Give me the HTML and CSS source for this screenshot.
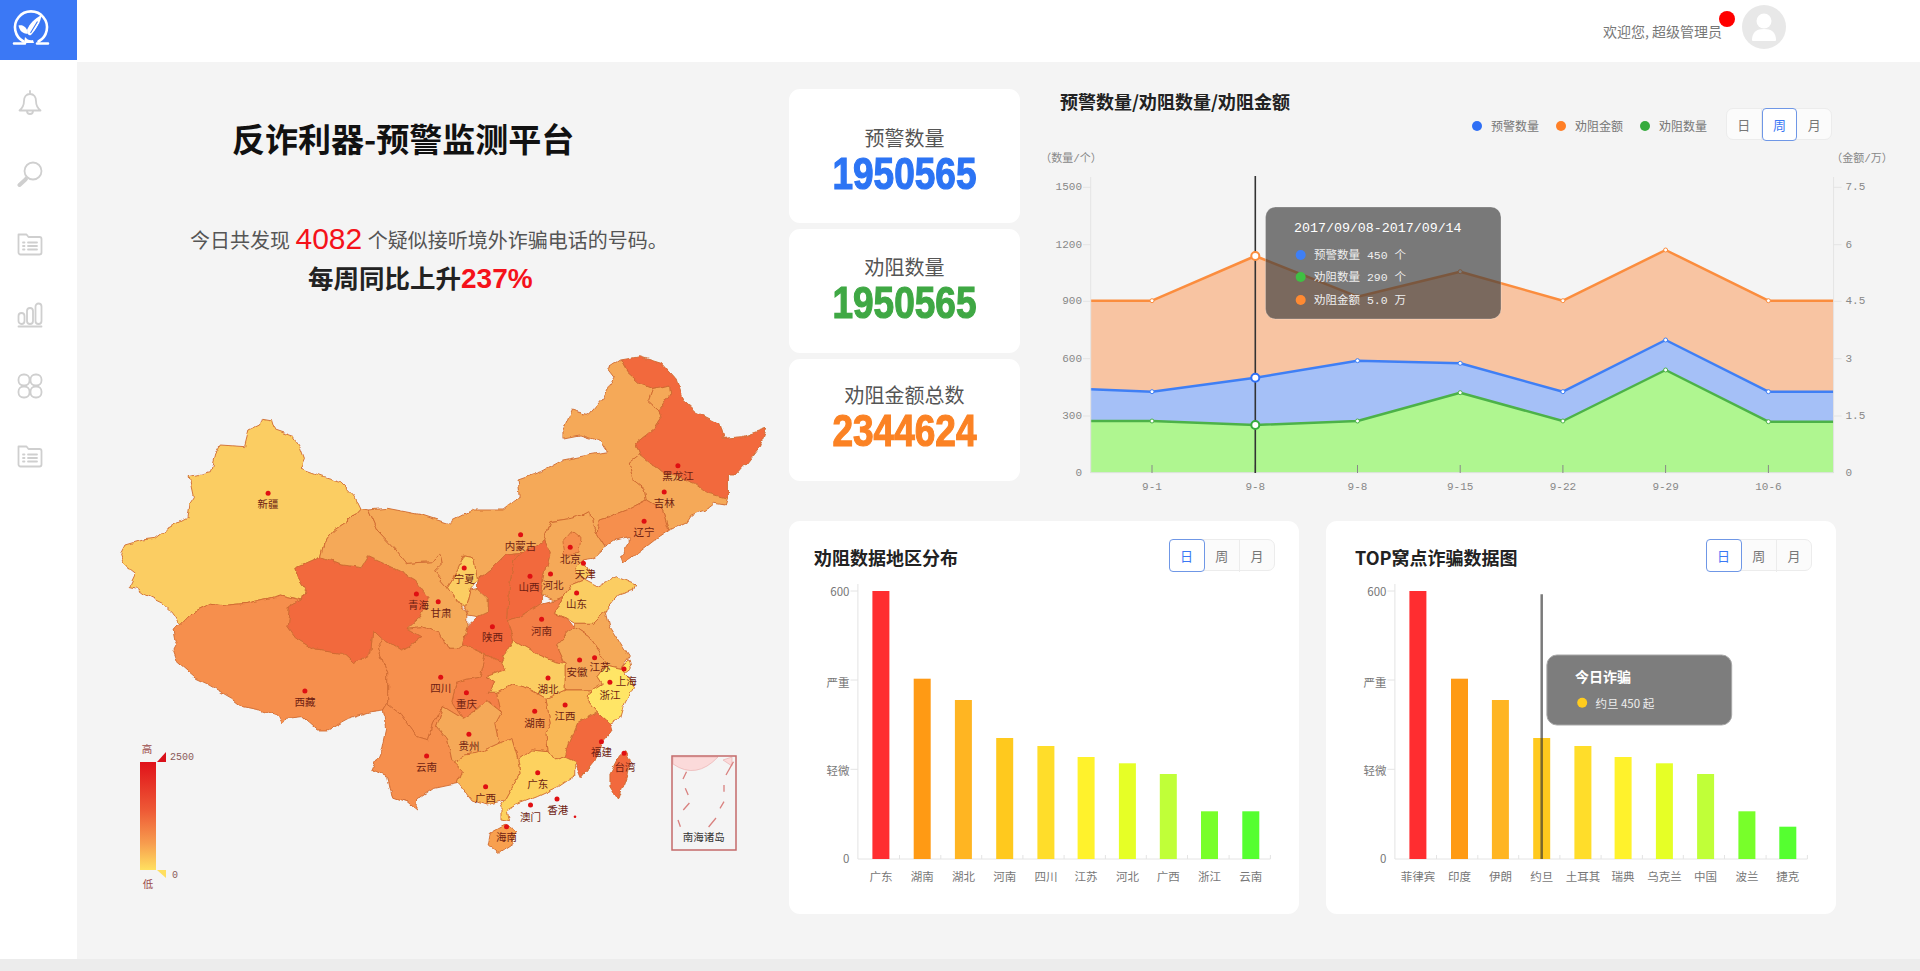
FILE: index.html
```html
<!DOCTYPE html>
<html lang="zh-CN">
<head>
<meta charset="utf-8">
<title>反诈利器-预警监测平台</title>
<link rel="stylesheet" href="styles.css">
</head>
<body>
<div class="app">
  <aside class="sidebar">
    <div class="logo">
      <svg viewBox="0 0 77 60" width="77" height="60">
        <g class="logo-line">
          <path d="M23.500 41.500A16 16 0 1 1 38.500 41.500"/>
          <path d="M14 43.500h11M37 43.500h11"/>
        </g>
        <path class="logo-fill" d="M18.500 25.500c4.500-1 8.500 1.500 9.500 8-4.500 1-8.500-2.500-9.500-8z"/>
        <path class="logo-fill" d="M27 30c2.500-6 7.500-11.500 14.500-15-1 7.500-5 14.500-10.500 20-2 1-3.500 0-4-5z"/>
        <path class="logo-cut" d="M30.500 33l7-11.500M33.500 34l6-10"/>
        <path class="logo-fill" d="M25 37c2 2.500 5 4 8 3l1 3h-10z"/>
      </svg>
    </div>
    <nav class="nav">
      <div class="nav-item"><svg viewBox="0 0 24 26" width="24" height="26"><path d="M12 4C8 4 6 7 6 11c0 5-1.500 7-4.500 9.500h21C19.500 18 18 16 18 11c0-4-2-7-6-7zM12 1v3M9 21a3 3 0 0 0 6 0"/></svg></div>
      <div class="nav-item"><svg viewBox="0 0 26 26" width="26" height="26"><circle cx="16" cy="10" r="8.500"/><path class="thick" d="M2.500 24l6-5.500"/><path d="M10 18l-1.500-1.500"/></svg></div>
      <div class="nav-item"><svg viewBox="0 0 26 24" width="26" height="24"><path d="M1.500 20.500V2.500h8l2 2.500h11a2 2 0 0 1 2 2v13.500a2 2 0 0 1-2 2h-19a2 2 0 0 1-2-2zM6 10.500h1.500M6 14h1.500M6 17.500h1.500M11 10.500h9M11 14h9M11 17.500h9"/></svg></div>
      <div class="nav-item"><svg viewBox="0 0 26 26" width="26" height="26"><rect x="1.500" y="11" width="6" height="11" rx="3"/><rect x="10" y="6" width="6" height="16" rx="3"/><rect x="18.500" y="1.500" width="6" height="20.500" rx="3"/><path d="M1.500 24.500h23"/></svg></div>
      <div class="nav-item"><svg viewBox="0 0 26 26" width="26" height="26"><rect x="1.500" y="1.500" width="11" height="11" rx="5"/><rect x="13.500" y="1.500" width="11" height="11" rx="5"/><rect x="1.500" y="13.500" width="11" height="11" rx="5"/><rect x="13.500" y="13.500" width="11" height="11" rx="5"/></svg></div>
      <div class="nav-item"><svg viewBox="0 0 26 24" width="26" height="24"><path d="M1.500 20.500V2.500h8l2 2.500h11a2 2 0 0 1 2 2v13.500a2 2 0 0 1-2 2h-19a2 2 0 0 1-2-2zM6 10.500h1.500M6 14h1.500M6 17.500h1.500M11 10.500h9M11 14h9M11 17.500h9"/></svg></div>
    </nav>
  </aside>

  <div class="main">
    <header class="topbar">
      <span class="welcome">欢迎您, 超级管理员</span>
      <span class="badge"></span>
      <span class="avatar">
        <svg viewBox="0 0 44 44" width="44" height="44"><circle cx="22" cy="16" r="7.500"/><path d="M10 35c0-8 5-11 12-11s12 3 12 11c0 1-1 1-2 1H12c-1 0-2 0-2-1z"/></svg>
      </span>
    </header>

    <div class="content">
      <section class="left">
        <h1 class="page-title">反诈利器-预警监测平台</h1>
        <p class="summary">今日共发现 <em class="summary-num">4082</em> 个疑似接听境外诈骗电话的号码。</p>
        <p class="trend">每周同比上升<em class="trend-num">237%</em></p>
        <svg class="map" viewBox="0 0 670 555" width="670" height="555">
          <defs>
            <linearGradient id="legendGrad" x1="0" y1="0" x2="0" y2="1">
              <stop offset="0" stop-color="#e0121a"/>
              <stop offset=".45" stop-color="#ee5a36"/>
              <stop offset=".75" stop-color="#f79c4e"/>
              <stop offset="1" stop-color="#ffe060"/>
            </linearGradient>
            <filter id="wiggle" filterUnits="userSpaceOnUse" x="0" y="0" width="1600" height="1600">
              <feTurbulence type="fractalNoise" baseFrequency=".035" numOctaves="2" seed="4" result="n"/>
              <feDisplacementMap in="SourceGraphic" in2="n" scale="16" xChannelSelector="R" yChannelSelector="G"/>
            </filter>
          </defs>
          <g transform="scale(.4273 .33333)" class="provinces" filter="url(#wiggle)">
            <polygon class="p1" points="25,640 35,615 75,600 105,595 130,570 180,535 185,490 195,470 185,410 235,395 245,345 258,315 315,320 325,270 350,255 355,235 378,240 385,270 430,290 445,320 455,355 445,385 500,410 540,425 570,465 585,505 560,540 525,570 505,600 495,650 470,665 435,685 445,720 458,745 450,780 400,765 370,775 320,790 275,795 235,790 195,815 165,855 150,820 125,790 85,765 65,745 45,740 60,700 35,675"/>
            <polygon class="p3" points="165,855 195,815 235,790 275,795 320,790 370,775 400,765 450,780 420,800 415,860 435,895 480,930 545,940 570,970 610,940 615,870 640,900 625,925 650,1000 650,1090 640,1110 610,1115 560,1135 510,1170 485,1170 450,1130 415,1135 405,1155 395,1130 350,1110 310,1100 285,1075 225,1030 200,1015 155,965 145,930 155,905 150,870"/>
            <polygon class="p4" points="435,685 470,665 495,650 535,670 590,680 605,650 640,670 680,695 715,720 745,770 725,830 695,865 730,890 700,920 680,930 650,905 640,900 615,870 610,940 570,970 545,940 480,930 435,895 415,860 420,800 450,780 458,745 445,720"/>
            <polygon class="p2" points="585,505 605,510 625,570 670,630 695,670 750,665 775,640 780,670 760,695 790,740 820,790 835,825 835,860 825,915 815,925 790,925 770,880 730,860 695,865 725,830 745,770 715,720 680,695 640,670 605,650 590,680 535,670 495,650 505,600 525,570 560,540"/>
            <polygon class="p2" points="605,510 650,505 730,525 790,550 850,510 920,510 960,470 955,420 1010,395 1060,360 1120,345 1165,335 1150,305 1100,285 1060,295 1060,270 1080,210 1120,225 1150,180 1180,110 1165,85 1195,60 1210,95 1240,130 1270,145 1260,180 1285,210 1290,235 1275,265 1230,310 1240,345 1215,370 1225,420 1250,445 1255,480 1210,510 1170,530 1145,540 1140,580 1130,560 1125,515 1080,535 1030,545 1015,600 965,640 925,645 890,690 860,720 850,650 830,645 810,700 790,740 760,695 780,670 775,640 750,665 695,670 670,630 625,570"/>
            <polygon class="p2" points="1270,145 1310,135 1312,165 1285,210 1260,180"/>
            <polygon class="p4" points="1195,60 1240,50 1290,70 1325,120 1340,180 1370,215 1425,250 1435,295 1480,290 1535,265 1520,320 1490,370 1465,405 1445,405 1445,475 1400,460 1370,430 1330,410 1290,395 1250,355 1240,345 1230,310 1275,265 1290,235 1285,210 1312,165 1310,135 1270,145 1240,130 1210,95"/>
            <polygon class="p2" points="1215,370 1240,345 1250,355 1290,395 1330,410 1370,430 1400,460 1445,475 1440,495 1415,490 1395,510 1360,525 1350,545 1310,570 1295,510 1255,480 1250,445 1225,420"/>
            <polygon class="p3" points="1255,480 1295,510 1310,570 1275,600 1235,640 1200,670 1195,650 1215,610 1215,590 1185,600 1160,620 1145,590 1140,580 1145,540 1170,530 1210,510"/>
            <polygon class="p2" points="1030,545 1080,535 1125,515 1130,560 1140,580 1160,620 1130,655 1105,660 1125,700 1110,720 1080,735 1060,770 1040,780 1010,765 1015,720 1030,640 1015,600"/>
            <polygon class="p3" points="1060,605 1080,575 1100,595 1095,640 1065,645"/>
            <polygon class="p1" points="1105,660 1125,700 1110,720 1090,690"/>
            <polygon class="p4" points="1015,600 1030,640 1015,720 1010,765 1010,790 960,830 930,845 935,740 945,660 965,640"/>
            <polygon class="p4" points="925,645 965,640 945,660 935,740 930,845 945,900 915,965 880,945 825,915 835,860 860,830 885,815 885,775 860,745 860,720 890,690"/>
            <polygon class="p1" points="810,700 830,645 850,650 860,720 840,750 830,800 820,790 790,740"/>
            <polygon class="p2" points="840,750 860,745 885,775 885,815 860,830 835,825 830,800"/>
            <polygon class="p1" points="1040,820 1060,770 1080,735 1110,720 1140,740 1185,710 1230,735 1225,750 1190,765 1160,810 1130,850 1090,850 1070,835"/>
            <polygon class="p35" points="930,845 960,830 1010,790 1040,780 1060,770 1040,820 1070,835 1085,860 1045,915 1065,970 1040,965 1005,945 945,900"/>
            <polygon class="p2" points="1090,850 1130,850 1160,810 1170,860 1190,900 1215,950 1195,985 1160,975 1145,935 1120,890 1085,860"/>
            <polygon class="p2" points="1085,860 1120,890 1145,935 1160,975 1140,1010 1150,1030 1125,1050 1065,1050 1065,970 1045,915"/>
            <polygon class="p0" points="1195,985 1215,960 1220,985 1205,1000"/>
            <polygon class="p0" points="1160,975 1195,985 1205,1000 1225,1040 1205,1090 1195,1135 1170,1150 1140,1115 1120,1085 1125,1050 1150,1030 1140,1010"/>
            <polygon class="p4" points="1140,1115 1170,1150 1175,1175 1150,1210 1130,1270 1105,1310 1090,1265 1065,1250 1075,1210 1095,1150"/>
            <polygon class="p15" points="1065,1050 1125,1050 1120,1085 1140,1115 1095,1150 1075,1210 1065,1250 1040,1260 1025,1235 1020,1180 1030,1150 1020,1075"/>
            <polygon class="p1" points="880,1010 915,965 945,900 1005,945 1040,965 1065,970 1065,1050 1020,1075 985,1050 940,1035 905,1060 885,1060 900,1025"/>
            <polygon class="p25" points="905,1060 940,1035 985,1050 1020,1075 1030,1150 1020,1180 1025,1235 985,1230 955,1260 940,1195 910,1210 900,1150 915,1115"/>
            <polygon class="p35" points="810,1030 835,1020 865,1015 880,945 915,965 925,990 880,1010 900,1025 885,1060 905,1060 915,1115 880,1080 855,1110 825,1135 800,1085"/>
            <polygon class="p3" points="640,900 650,905 680,930 700,920 730,890 695,865 730,860 770,880 790,925 815,925 825,915 880,945 865,1015 835,1020 810,1030 800,1085 825,1135 780,1100 760,1140 745,1200 720,1190 680,1120 650,1090 650,1000 625,925"/>
            <polygon class="p3" points="640,1110 650,1090 680,1120 720,1190 745,1200 760,1140 780,1100 765,1160 790,1200 800,1260 825,1295 815,1330 760,1345 720,1380 718,1410 695,1385 660,1370 650,1310 615,1290 635,1230 645,1170"/>
            <polygon class="p2" points="780,1100 825,1135 855,1110 880,1080 915,1115 900,1150 910,1210 860,1240 830,1245 805,1270 800,1260 790,1200 765,1160"/>
            <polygon class="p15" points="805,1270 830,1245 860,1240 910,1210 940,1195 955,1260 960,1300 925,1380 880,1395 845,1380 815,1330 825,1295"/>
            <polygon class="p05" points="955,1260 985,1230 1025,1235 1040,1260 1065,1250 1090,1265 1090,1305 1050,1340 1000,1370 950,1395 930,1410 935,1445 915,1440 915,1400 925,1380 960,1300"/>
            <polygon class="p25" points="890,1480 925,1455 950,1475 945,1510 910,1540 885,1515"/>
            <polygon class="p4" points="1190,1250 1205,1235 1215,1260 1210,1305 1190,1380 1170,1340 1170,1300"/>
          </g>
          <g class="map-dots">
            <circle cx="158.100" cy="153.300" r="2.500"/><circle cx="194.900" cy="351" r="2.500"/><circle cx="306.400" cy="254" r="2.500"/><circle cx="328.200" cy="261.700" r="2.500"/><circle cx="354.200" cy="228" r="2.500"/><circle cx="410.600" cy="194.700" r="2.500"/><circle cx="382.400" cy="286.700" r="2.500"/><circle cx="420" cy="236.300" r="2.500"/><circle cx="440.500" cy="234" r="2.500"/><circle cx="460.200" cy="207.300" r="2.500"/><circle cx="473.400" cy="223.300" r="2.500"/><circle cx="534.100" cy="181.300" r="2.500"/><circle cx="554.200" cy="152" r="2.500"/><circle cx="567.900" cy="125.700" r="2.500"/><circle cx="466.600" cy="253" r="2.500"/><circle cx="431.600" cy="279.300" r="2.500"/><circle cx="484.600" cy="317.700" r="2.500"/><circle cx="469.600" cy="320" r="2.500"/><circle cx="514" cy="329" r="2.500"/><circle cx="438" cy="338" r="2.500"/><circle cx="330.700" cy="337.300" r="2.500"/><circle cx="356.400" cy="352.700" r="2.500"/><circle cx="499.900" cy="342.300" r="2.500"/><circle cx="424.700" cy="371.300" r="2.500"/><circle cx="455.100" cy="365" r="2.500"/><circle cx="358.900" cy="394.300" r="2.500"/><circle cx="316.600" cy="416" r="2.500"/><circle cx="375.600" cy="446.700" r="2.500"/><circle cx="427.700" cy="432.700" r="2.500"/><circle cx="491.400" cy="401.700" r="2.500"/><circle cx="514" cy="413.300" r="2.500"/><circle cx="420.500" cy="465" r="2.500"/><circle cx="447" cy="459" r="2.500"/><circle cx="396.500" cy="486.700" r="2.500"/>
            <circle cx="465" cy="476.700" r="1.300"/>
          </g>
          <g class="map-labels">
            <text x="158.100" y="163.300">新疆</text><text x="194.900" y="361.700">西藏</text><text x="308.500" y="264.300">青海</text><text x="331" y="272.700">甘肃</text><text x="354.200" y="238">宁夏</text><text x="410.600" y="205.300">内蒙古</text><text x="382.400" y="296.700">陕西</text><text x="419" y="246">山西</text><text x="443" y="244.300">河北</text><text x="460.200" y="218.700">北京</text><text x="475.200" y="233.300">天津</text><text x="534.100" y="191.700">辽宁</text><text x="554.200" y="162.300">吉林</text><text x="567.900" y="135.700">黑龙江</text><text x="466.600" y="263.300">山东</text><text x="431.600" y="290">河南</text><text x="490" y="326">江苏</text><text x="467" y="331">安徽</text><text x="516.200" y="340">上海</text><text x="438" y="348.300">湖北</text><text x="330.700" y="347.700">四川</text><text x="356.400" y="363.300">重庆</text><text x="499.900" y="354">浙江</text><text x="424.700" y="382.300">湖南</text><text x="455.100" y="375.700">江西</text><text x="358.900" y="405">贵州</text><text x="316.600" y="426.700">云南</text><text x="375.600" y="457.300">广西</text><text x="427.700" y="443.300">广东</text><text x="491.400" y="411.700">福建</text><text x="514.900" y="426.700">台湾</text><text x="420.500" y="476">澳门</text><text x="447.800" y="469.300">香港</text><text x="396.500" y="496.700">海南</text>
          </g>
          <g class="inset">
            <path class="inset-pink" d="M563 424Q586 440 608 417H563zM613 420l9-3v9z"/>
            <rect class="inset-frame" x="562" y="416" width="64" height="94"/>
            <path class="inset-dash" d="M575.300 448.300l2.900 6.700M579.400 463l-6.100 7M568 480l2.400 6.700M606 478l-7.400 9M614 461.700l-4 6.600M614 445v6.700M623.500 421.700l-7.500 13.300M576.500 431.700l-3.500 7.300"/>
            <text class="inset-text" x="593.700" y="496.700">南海诸岛</text>
          </g>
          <g class="legend">
            <rect x="30" y="422" width="16" height="108" fill="url(#legendGrad)"/>
            <polygon class="tri-red" points="47,422 56,422 56,412"/>
            <polygon class="tri-yellow" points="47,530 56,530 56,538"/>
            <text x="37" y="408">高</text>
            <text x="60" y="417" class="legend-num">2500</text>
            <text x="62" y="535" class="legend-num">0</text>
            <text x="38" y="543">低</text>
          </g>
        </svg>
      </section>

      <section class="right">
        <div class="top-row">
          <div class="stats">
            <div class="stat stat-a"><div class="stat-label">预警数量</div><div class="stat-num num-blue"><span>1950565</span></div></div>
            <div class="stat stat-b"><div class="stat-label">劝阻数量</div><div class="stat-num num-green"><span>1950565</span></div></div>
            <div class="stat stat-c"><div class="stat-label">劝阻金额总数</div><div class="stat-num num-orange"><span>2344624</span></div></div>
          </div>
          <div class="trend-panel">
            <div class="trend-head">
              <h2 class="panel-title">预警数量/劝阻数量/劝阻金额</h2>
              <div class="trend-tools">
                <div class="legend-row">
                  <span class="legend-item"><i class="ldot ldot-blue"></i>预警数量</span>
                  <span class="legend-item"><i class="ldot ldot-orange"></i>劝阻金额</span>
                  <span class="legend-item"><i class="ldot ldot-green"></i>劝阻数量</span>
                </div>
                <div class="seg"><span>日</span><span class="on">周</span><span>月</span></div>
              </div>
            </div>
            <svg class="line-chart" viewBox="10 60 880 362" width="880" height="362">
              <polygon class="a-orange" points="60.700,392.700 60.700,220.700 122,220.700 225.300,176 327.500,216.700 430.200,191.700 532.900,220.700 635.600,170 738.400,220.700 803.600,220.700 803.600,392.700"/>
              <polygon class="a-blue" points="60.700,392.700 60.700,309.300 122,311.700 225.300,297.700 327.500,280.700 430.200,283.300 532.900,311.700 635.600,260 738.400,311.700 803.600,311.700 803.600,392.700"/>
              <polygon class="a-green" points="60.700,392.700 60.700,341 122,341 225.300,345 327.500,341 430.200,312.700 532.900,341 635.600,290 738.400,341.700 803.600,341.700 803.600,392.700"/>
              <polyline class="l-orange" points="60.700,220.700 122,220.700 225.300,176 327.500,216.700 430.200,191.700 532.900,220.700 635.600,170 738.400,220.700 803.600,220.700"/>
              <polyline class="l-blue" points="60.700,309.300 122,311.700 225.300,297.700 327.500,280.700 430.200,283.300 532.900,311.700 635.600,260 738.400,311.700 803.600,311.700"/>
              <polyline class="l-green" points="60.700,341 122,341 225.300,345 327.500,341 430.200,312.700 532.900,341 635.600,290 738.400,341.700 803.600,341.700"/>
              <path class="axis" d="M60.700 97V392.700H803.600V97M53 107.300h8M53 164.700h8M53 221.300h8M53 278.700h8M53 336h8M803.600 107.300h8M803.600 164.700h8M803.600 221.300h8M803.600 278.700h8M803.600 336h8"/>
              <path class="xticks" d="M122 385v8M225.300 385v8M327.500 385v8M430.200 385v8M532.900 385v8M635.600 385v8M738.400 385v8"/>
              <g class="pts pts-orange"><circle cx="122" cy="220.700" r="2"/><circle cx="327.500" cy="216.700" r="2"/><circle cx="430.200" cy="191.700" r="2"/><circle cx="532.900" cy="220.700" r="2"/><circle cx="635.600" cy="170" r="2"/><circle cx="738.400" cy="220.700" r="2"/></g>
              <g class="pts pts-blue"><circle cx="122" cy="311.700" r="2"/><circle cx="327.500" cy="280.700" r="2"/><circle cx="430.200" cy="283.300" r="2"/><circle cx="532.900" cy="311.700" r="2"/><circle cx="635.600" cy="260" r="2"/><circle cx="738.400" cy="311.700" r="2"/></g>
              <g class="pts pts-green"><circle cx="122" cy="341" r="2"/><circle cx="327.500" cy="341" r="2"/><circle cx="430.200" cy="312.700" r="2"/><circle cx="532.900" cy="341" r="2"/><circle cx="635.600" cy="290" r="2"/><circle cx="738.400" cy="341.700" r="2"/></g>
              <path class="cursor" d="M225.300 96V393"/>
              <circle class="hot hot-orange" cx="225.300" cy="176" r="4"/>
              <circle class="hot hot-blue" cx="225.300" cy="297.700" r="4"/>
              <circle class="hot hot-green" cx="225.300" cy="345" r="4"/>
              <g class="axis-text end">
                <text x="52" y="107.300">1500</text><text x="52" y="164.700">1200</text><text x="52" y="221.300">900</text><text x="52" y="278.700">600</text><text x="52" y="336">300</text><text x="52" y="392.700">0</text>
              </g>
              <g class="axis-text">
                <text x="815.500" y="107.300">7.5</text><text x="815.500" y="164.700">6</text><text x="815.500" y="221.300">4.5</text><text x="815.500" y="278.700">3</text><text x="815.500" y="336">1.5</text><text x="815.500" y="392.700">0</text>
              </g>
              <g class="axis-text mid">
                <text x="122" y="407">9-1</text><text x="225.300" y="407">9-8</text><text x="327.500" y="407">9-8</text><text x="430.200" y="407">9-15</text><text x="532.900" y="407">9-22</text><text x="635.600" y="407">9-29</text><text x="738.400" y="407">10-6</text>
                <text x="41" y="79">（数量/个）</text><text x="832" y="79">（金额/万）</text>
              </g>
              <g class="tip">
                <rect class="tip-box" x="235.500" y="127" width="235.500" height="112" rx="10"/>
                <text class="tip-head" x="264" y="148">2017/09/08-2017/09/14</text>
                <circle class="tip-blue" cx="270.700" cy="175" r="5"/><text class="tip-row" x="284" y="175">预警数量 450 个</text>
                <circle class="tip-green" cx="270.700" cy="197" r="5"/><text class="tip-row" x="284" y="197">劝阻数量 290 个</text>
                <circle class="tip-orange" cx="270.700" cy="220" r="5"/><text class="tip-row" x="284" y="220">劝阻金额 5.0 万</text>
              </g>
            </svg>
          </div>
        </div>

        <div class="bottom-row">
          <article class="card">
            <div class="card-head">
              <h2 class="panel-title">劝阻数据地区分布</h2>
              <div class="seg"><span class="on">日</span><span>周</span><span>月</span></div>
            </div>
            <svg class="bars" viewBox="9.500 60 510 344" width="510" height="344">
              <path class="axis" d="M78.400 74V349H490.900M71 81h7.400M71 170h7.400M71 259.300h7.400M120 345v4M161.300 345v4M202.200 345v4M243.400 345v4M284.600 345v4M325.900 345v4M366.800 345v4M408 345v4M449.600 345v4M490.900 345v4"/>
              <rect class="b1" x="92.900" y="81" width="17" height="268"/>
              <rect class="b2" x="134.200" y="168.700" width="17" height="180.300"/>
              <rect class="b3" x="175.400" y="190" width="17" height="159"/>
              <rect class="b4" x="216.700" y="228" width="17" height="121"/>
              <rect class="b5" x="257.900" y="236" width="17" height="113"/>
              <rect class="b6" x="298.100" y="247" width="17" height="102"/>
              <rect class="b7" x="339.400" y="253.300" width="17" height="95.700"/>
              <rect class="b8" x="380.300" y="264" width="17" height="85"/>
              <rect class="b9" x="421.500" y="301.300" width="17" height="47.700"/>
              <rect class="b10" x="462.800" y="301.300" width="17" height="47.700"/>
              <g class="bar-text end"><text x="70" y="81">600</text><text x="70" y="172">严重</text><text x="70" y="260">轻微</text><text x="70" y="348">0</text></g>
              <g class="bar-text mid"><text x="101.400" y="366">广东</text><text x="142.700" y="366">湖南</text><text x="183.900" y="366">湖北</text><text x="225.200" y="366">河南</text><text x="266.400" y="366">四川</text><text x="306.600" y="366">江苏</text><text x="347.900" y="366">河北</text><text x="388.800" y="366">广西</text><text x="430" y="366">浙江</text><text x="471.300" y="366">云南</text></g>
            </svg>
          </article>

          <article class="card">
            <div class="card-head card-head-b">
              <h2 class="panel-title">TOP窝点诈骗数据图</h2>
              <div class="seg"><span class="on">日</span><span>周</span><span>月</span></div>
            </div>
            <svg class="bars" viewBox="6.100 60 510 344" width="510" height="344">
              <path class="axis" d="M75 74V349H487.500M67.500 81h7.500M67.500 170h7.500M67.500 259.300h7.500M116.600 345v4M157.900 345v4M198.800 345v4M240 345v4M281.200 345v4M322.500 345v4M363.400 345v4M404.600 345v4M446.200 345v4M487.500 345v4"/>
              <rect class="b1" x="89.500" y="81" width="17" height="268"/>
              <rect class="b2" x="131.100" y="168.700" width="17" height="180.300"/>
              <rect class="b3" x="172" y="190" width="17" height="159"/>
              <rect class="b4" x="213.300" y="228" width="17" height="121"/>
              <rect class="b5" x="254.500" y="236" width="17" height="113"/>
              <rect class="b6" x="294.700" y="247" width="17" height="102"/>
              <rect class="b7" x="336" y="253.300" width="17" height="95.700"/>
              <rect class="b8" x="377.200" y="264" width="17" height="85"/>
              <rect class="b9" x="418.500" y="301.300" width="17" height="47.700"/>
              <rect class="b10" x="459.400" y="316.700" width="17" height="32.300"/>
              <g class="bar-text end"><text x="66.500" y="81">600</text><text x="66.500" y="172">严重</text><text x="66.500" y="260">轻微</text><text x="66.500" y="348">0</text></g>
              <g class="bar-text mid"><text x="98" y="366">菲律宾</text><text x="139.600" y="366">印度</text><text x="180.500" y="366">伊朗</text><text x="221.800" y="366">约旦</text><text x="263" y="366">土耳其</text><text x="303.200" y="366">瑞典</text><text x="344.500" y="366">乌克兰</text><text x="385.700" y="366">中国</text><text x="427" y="366">波兰</text><text x="467.900" y="366">捷克</text></g>
              <path class="bar-cursor" d="M221.800 84.300V349"/>
              <rect class="bar-tip" x="227" y="145" width="184.800" height="70" rx="10"/>
              <text class="bar-tip-head" x="255" y="165.700">今日诈骗</text>
              <circle class="bar-tip-dot" cx="262.300" cy="192.700" r="5"/>
              <text class="bar-tip-row" x="275.500" y="192.700">约旦 450 起</text>
            </svg>
          </article>
        </div>
      </section>
    </div>
  </div>
</div>
</body>
</html>
```
FILE: styles.css
```css
* { box-sizing: border-box; }
html, body { margin: 0; padding: 0; }
body {
  background: #ececec;
  height: 971px;
  overflow: hidden;
  font-family: "Noto Sans CJK SC", "Liberation Sans", sans-serif;
  color: #333;
}
.app { display: flex; height: 959px; }

/* sidebar */
.sidebar { width: 77px; flex: none; background: #fff; }
.logo { height: 60px; background: #3b78f5; }
.logo svg { display: block; }
.logo-line { fill: none; stroke: #fff; stroke-width: 2.6; stroke-linecap: round; }
.logo-fill { fill: #fff; }
.logo-cut { fill: none; stroke: #3b78f5; stroke-width: 1.1; }
.nav { padding-top: 8px; }
.nav-item { height: 70.6px; display: flex; align-items: center; justify-content: center; padding-right: 18px; }
.nav-item svg { fill: none; stroke: #cfcfcf; stroke-width: 1.8; stroke-linecap: round; stroke-linejoin: round; }
.nav-item .thick { stroke-width: 4; }

/* top bar */
.main { flex: 1; display: flex; flex-direction: column; min-width: 0; }
.topbar {
  height: 62px; flex: none; background: #fff;
  display: flex; align-items: flex-start; justify-content: flex-end;
  padding-right: 134px; position: relative;
}
.welcome { font-size: 14px; line-height: 20px; color: #777; margin-top: 21px; margin-right: 20px; }
.badge { position: absolute; right: 185px; top: 11px; width: 16px; height: 16px; border-radius: 50%; background: #f00; }
.avatar { width: 44px; height: 44px; margin-top: 5px; border-radius: 50%; background: #e8e8e8; overflow: hidden; }
.avatar svg { display: block; fill: #fff; }

/* layout */
.content { flex: 1; display: flex; background: #f4f4f4; min-height: 0; }
.left { width: 712px; flex: none; }
.right { flex: 1; padding-top: 27px; min-width: 0; }
.top-row { display: flex; height: 392px; }
.bottom-row { display: flex; gap: 27px; margin-top: 40px; }

/* left panel */
.page-title { margin: 58px 0 0 155px; font-size: 33px; line-height: 36px; font-weight: 700; color: #111; white-space: nowrap; }
.summary { margin: 64px 0 0 113px; font-size: 20px; line-height: 40px; color: #555; white-space: nowrap; word-spacing: 1px; }
.summary-num { font-style: normal; font-size: 30px; color: #f5121a; font-family: "Liberation Sans", sans-serif; vertical-align: -1px; line-height: 30px; }
.trend { margin: 0 0 0 231px; font-size: 25.500px; line-height: 34px; font-weight: 700; color: #222; white-space: nowrap; }
.trend-num { font-style: normal; color: #f5121a; font-family: "Liberation Sans", sans-serif; font-size: 28px; line-height: 30px; }
.map { display: block; margin: 46px 0 0 33px; }
.provinces polygon { stroke: #cf6a30; stroke-width: .9; stroke-linejoin: round; vector-effect: non-scaling-stroke; }
.p0 { fill: #ffe566; }
.p05 { fill: #fdd25e; }
.p1 { fill: #fbcd62; }
.p15 { fill: #f9b857; }
.p2 { fill: #f5a958; }
.p25 { fill: #f8a050; }
.p3 { fill: #f68f4d; }
.p35 { fill: #f47f47; }
.p4 { fill: #f2693e; }
.map-dots circle { fill: #e00f12; }
.map-labels text { font-size: 10.500px; fill: #6e1d12; text-anchor: middle; dominant-baseline: central; }
.inset-frame { fill: none; stroke: #c46a6a; stroke-width: 1.5; }
.inset-pink { fill: #fbdada; stroke: #e9a7a7; stroke-width: .6; }
.inset-dash { fill: none; stroke: #d9817f; stroke-width: 1.3; }
.inset-text { font-size: 10.500px; fill: #333; text-anchor: middle; dominant-baseline: central; }
.tri-red { fill: #d9101a; }
.tri-yellow { fill: #ffdf60; }
.legend text { font-size: 10.500px; fill: #9a4a4a; text-anchor: middle; dominant-baseline: central; }
.legend .legend-num { text-anchor: start; font-family: "Liberation Mono", monospace; font-size: 10px; fill: #8a5a5a; }

/* stat cards */
.stats { width: 231px; flex: none; display: flex; flex-direction: column; gap: 6px; }
.stat { background: #fff; border-radius: 11px; text-align: center; }
.stat-a { height: 134px; padding-top: 35px; }
.stat-b { height: 124px; padding-top: 24px; }
.stat-c { height: 122px; padding-top: 22px; }
.stat-label { font-size: 20px; line-height: 28px; color: #555; }
.stat-num { font-family: "Liberation Sans", sans-serif; font-weight: 700; font-size: 37px; line-height: 46px; -webkit-text-stroke: 1px currentColor; }
.stat-num span { display: inline-block; transform: scaleY(1.2); }
.num-blue { color: #2c74f4; }
.num-green { color: #3fa844; }
.num-orange { color: #fb8224; }

/* trend chart */
.trend-panel { margin-left: 20px; flex: 1; min-width: 0; }
.trend-head { height: 51px; display: flex; justify-content: space-between; padding: 0 88px 0 20px; }
.panel-title { margin: 0; font-size: 18px; line-height: 24px; font-weight: 700; color: #222; white-space: nowrap; }
.trend-tools { align-self: flex-end; display: flex; align-items: center; gap: 19px; }
.legend-row { display: flex; gap: 17px; margin-top: 4px; }
.legend-item { display: flex; align-items: center; gap: 9px; font-size: 12px; line-height: 16px; color: #777; white-space: nowrap; }
.ldot { width: 10px; height: 10px; border-radius: 50%; display: block; }
.ldot-blue { background: #2f6ff5; }
.ldot-orange { background: #ff7f26; }
.ldot-green { background: #35ab3d; }
.seg { display: flex; height: 32px; width: 106px; border: 1.5px solid #ececec; border-radius: 7px; background: #fbfbfb; }
.seg span { flex: 1; display: flex; align-items: center; justify-content: center; font-size: 13px; color: #777; border-right: 1.5px solid #ececec; margin: -1.5px 0; }
.seg span:last-child { border-right: 0; }
.seg .on { color: #3b78f5; border: 1.5px solid #6f97e6; border-radius: 4px; background: #fff; }
.seg span:first-child.on { margin-left: -1.5px; }
.line-chart { display: block; }
.a-orange { fill: #f8c4a2; }
.a-blue { fill: #a5c0f7; }
.a-green { fill: #aff690; }
.l-orange, .l-blue, .l-green { fill: none; stroke-width: 2.5; stroke-linejoin: round; }
.l-orange { stroke: #fb8d3e; }
.l-blue { stroke: #3f7ff5; }
.l-green { stroke: #4cb248; }
.axis { fill: none; stroke: #e4e4e4; stroke-width: 1; }
.xticks { fill: none; stroke: #888; stroke-width: 1; }
.pts circle { fill: #fff; stroke-width: 1; }
.pts-orange circle { stroke: #fb8d3e; }
.pts-blue circle { stroke: #3f7ff5; }
.pts-green circle { stroke: #4cb248; }
.cursor { fill: none; stroke: #333; stroke-width: 1.6; }
.hot { fill: #fff; stroke-width: 2; }
.hot-orange { stroke: #fb8d3e; }
.hot-blue { stroke: #2f6ff5; }
.hot-green { stroke: #35ab3d; }
.axis-text text { font-family: "Liberation Mono", "Noto Sans CJK SC", monospace; font-size: 11px; fill: #888; dominant-baseline: central; }
.end text { text-anchor: end; }
.mid text { text-anchor: middle; }
.tip-box { fill: rgba(62, 62, 62, .68); stroke: rgba(255, 255, 255, .25); }
.tip-head { font-family: "Liberation Mono", monospace; font-size: 13.300px; fill: #fff; dominant-baseline: central; }
.tip-row { font-family: "Liberation Mono", "Noto Sans CJK SC", monospace; font-size: 11.500px; fill: #eee; dominant-baseline: central; }
.tip-blue { fill: #3f7ff5; }
.tip-green { fill: #3fc043; }
.tip-orange { fill: #ff8a32; }

/* bar cards */
.card { width: 510px; height: 393px; background: #fff; border-radius: 11px; }
.card-head { height: 49px; display: flex; justify-content: space-between; padding: 18px 24px 0 25px; }
.card-head-b { padding-left: 29px; }
.card-head .panel-title { margin-top: 6px; }
.bars { display: block; }
.b1 { fill: #ff2d30; }
.b2 { fill: #ff9a14; }
.b3 { fill: #ffb522; }
.b4 { fill: #ffc91e; }
.b5 { fill: #ffdd2a; }
.b6 { fill: #fff22c; }
.b7 { fill: #e6ff26; }
.b8 { fill: #c0ff38; }
.b9 { fill: #78ff2a; }
.b10 { fill: #55ff30; }
.bar-text text { font-size: 11.500px; fill: #777; dominant-baseline: central; }
.bar-cursor { fill: none; stroke: rgba(50, 50, 50, .65); stroke-width: 2.5; }
.bar-tip { fill: #7d7d7d; stroke: #a8a8a8; }
.bar-tip-head { font-size: 14px; font-weight: 700; fill: #fff; dominant-baseline: central; }
.bar-tip-dot { fill: #ffcc1e; }
.bar-tip-row { font-size: 11.500px; fill: #eee; dominant-baseline: central; }
```
